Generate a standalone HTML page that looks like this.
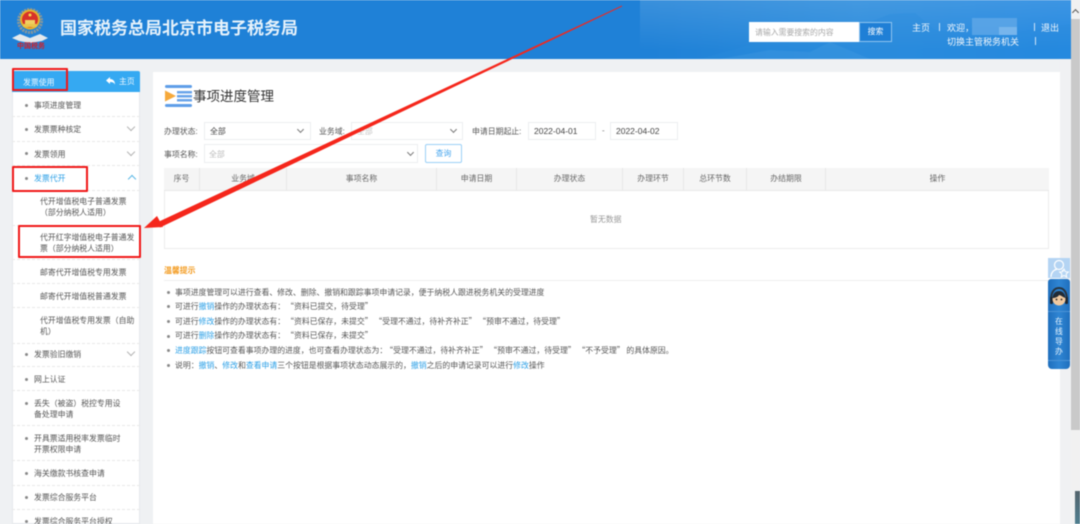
<!DOCTYPE html>
<html lang="zh">
<head>
<meta charset="utf-8">
<title>事项进度管理</title>
<style>
html,body{margin:0;padding:0;width:1080px;height:524px;overflow:hidden;background:#eff1f3}
body{position:relative;font-family:"Liberation Sans","Noto Sans CJK SC",sans-serif;font-size:7.87px;color:#555}
#w{position:absolute;left:0;top:0;width:1080px;height:524px;overflow:hidden;filter:blur(.45px)}
.a{position:absolute}
.t{position:absolute;white-space:nowrap;line-height:12px;height:12px;margin-top:1px}
.n{font-family:"Noto Sans CJK SC",sans-serif}
.b{position:absolute;width:3px;height:3px;border-radius:50%;background:#8a8a8a}
.s{position:absolute;left:12px;width:128px;height:0;border-top:1px dashed #e8e8e8}
.c{position:absolute;width:5px;height:5px;border-right:1px solid #b4b4b4;border-bottom:1px solid #b4b4b4;transform:rotate(45deg)}
.i{position:absolute;background:#fff;border:1px solid #eceef0;box-sizing:border-box}
.h{position:absolute;top:168px;height:22px;line-height:22px;text-align:center;background:#f5f5f5;border-right:1px solid #e8e8e8;box-sizing:border-box;color:#666}
.r{position:absolute;border:2px solid #f01818;box-sizing:border-box;border-radius:1px}
.l{color:#2a9fe6}
.w{color:#f3f7fb;font-size:9px}
.g{margin-left:5px}
</style>
</head>
<body>
<div id="w">
<!-- header -->
<div class="a" style="left:0;top:0;width:1071px;height:59px;background:linear-gradient(90deg,#1f81d7 0,#1f81d7 60%,#2a8bdc 80%,#2287e0 100%)"></div>
<div class="a" style="left:640px;top:0;width:431px;height:59px;background:linear-gradient(180deg,rgba(255,255,255,.12),rgba(255,255,255,0) 85%)"></div>
<svg class="a" style="left:700px;top:0" width="371" height="59" viewBox="0 0 371 59">
<path d="M0 59L60 42 120 32 160 26 190 14 215 13 235 30 290 36 371 24V59Z" fill="#2a8bdc" opacity=".35"/>
<path d="M20 59L70 50 110 52 130 42 170 59Z" fill="#5aa8e6" opacity=".2"/>
</svg>
<!-- logo -->
<svg class="a" style="left:10px;top:5px" width="42" height="50" viewBox="0 0 42 50">
<path d="M2 33L10 29 20 33 30 29 38 33 32 36 20 38 9 36Z" fill="#e4e9ed"/>
<circle cx="20" cy="16" r="11.500" fill="none" stroke="#8a989a" stroke-width="3" stroke-dasharray="2 1"/>
<circle cx="20" cy="14.500" r="10" fill="#e5b22d"/>
<circle cx="20" cy="14.500" r="8" fill="#d8322a"/>
<path d="M13 19h14v3H13z" fill="#e8c44a"/>
<path d="M15 19v-4h10v4z" fill="#f0cf62"/>
<circle cx="20" cy="10" r="1.500" fill="#f7d94c"/>
</svg>
<div class="t" style="left:17px;top:41px;color:#d0202a;font-size:7px;font-weight:700;line-height:10px;height:10px">中国税务</div>
<div class="t" style="left:60px;top:16px;height:24px;line-height:24px;font-size:17px;font-weight:700;color:#e6f2fb">国家税务总局北京市电子税务局</div>
<!-- search -->
<div class="a" style="left:749px;top:22px;width:110px;height:20px;background:#fff"></div>
<div class="t" style="left:755px;top:26px;color:#a8a8a8">请输入需要搜索的内容</div>
<div class="a" style="left:859px;top:22px;width:33px;height:20px;box-sizing:border-box;border:1px solid #8fc4ef;background:#1f7fd6;color:#fff;text-align:center;line-height:18px">搜索</div>
<div class="t w" style="left:912px;top:21px">主页</div>
<div class="a" style="left:939px;top:23px;width:1px;height:8px;background:#cfe4f7"></div>
<div class="t w" style="left:947px;top:21px">欢迎，</div>
<div class="a" style="left:972px;top:18px;width:45px;height:17px;background:#66abe8;opacity:.7"></div>
<div class="a" style="left:999px;top:27px;width:18px;height:8px;background:#86bdee;opacity:.7"></div>
<div class="a" style="left:1034px;top:23px;width:1px;height:8px;background:#cfe4f7"></div>
<div class="t w" style="left:1041px;top:21px">退出</div>
<div class="t w" style="left:947px;top:35px">切换主管税务机关</div>
<div class="a" style="left:1035px;top:37px;width:1px;height:8px;background:#cfe4f7"></div>

<!-- sidebar -->
<div class="a" style="left:12px;top:71px;width:128px;height:453px;background:#fff;border:1px solid #e6e9ec;border-top:0;box-sizing:border-box"></div>
<div class="a" style="left:12px;top:71px;width:128px;height:21px;background:#35a9f2;border-radius:2px 2px 0 0"></div>
<div class="t" style="left:23px;top:76px;color:#eef8ff">发票使用</div>
<svg class="a" style="left:106px;top:77px" width="10" height="9" viewBox="0 0 10 9"><path d="M4 0L0 3.500 4 7V5c2.500 0 4 .6 5 2.500C9 4 7 2 4 2z" fill="#fff"/></svg>
<div class="t" style="left:119px;top:75px;color:#eef8ff">主页</div>

<i class="b" style="left:25px;top:104px"></i><div class="t" style="left:34px;top:99px">事项进度管理</div>
<div class="s" style="top:116px"></div>
<i class="b" style="left:25px;top:128px"></i><div class="t" style="left:34px;top:123px">发票票种核定</div>
<i class="c" style="left:128px;top:124px"></i>
<div class="s" style="top:141px"></div>
<i class="b" style="left:25px;top:152px"></i><div class="t" style="left:34px;top:148px">发票领用</div>
<i class="c" style="left:128px;top:149px"></i>
<div class="s" style="top:165px"></div>
<i class="b" style="left:25px;top:177px"></i><div class="t l" style="left:34px;top:172px">发票代开</div>
<i class="c" style="left:129px;top:176px;transform:rotate(225deg);border-color:#5db8e6"></i>
<div class="s" style="top:190px"></div>

<div class="t" style="left:40px;top:195px">代开增值税电子普通发票</div>
<div class="t" style="left:40px;top:206px">（部分纳税人适用）</div>
<div class="s" style="top:225px"></div>
<div class="t" style="left:40px;top:231px">代开红字增值税电子普通发</div>
<div class="t" style="left:40px;top:242px">票（部分纳税人适用）</div>
<div class="s" style="top:259px"></div>
<div class="t" style="left:40px;top:266px">邮寄代开增值税专用发票</div>
<div class="s" style="top:283px"></div>
<div class="t" style="left:40px;top:290px">邮寄代开增值税普通发票</div>
<div class="s" style="top:307px"></div>
<div class="t" style="left:40px;top:314px">代开增值税专用发票（自助</div>
<div class="t" style="left:40px;top:325px">机）</div>
<div class="s" style="top:343px"></div>
<i class="b" style="left:25px;top:353px"></i><div class="t" style="left:34px;top:348px">发票验旧缴销</div>
<i class="c" style="left:128px;top:349px"></i>
<div class="s" style="top:366px"></div>
<i class="b" style="left:25px;top:378px"></i><div class="t" style="left:34px;top:373px">网上认证</div>
<div class="s" style="top:390px"></div>
<i class="b" style="left:25px;top:402px"></i><div class="t" style="left:34px;top:397px">丢失（被盗）税控专用设</div>
<div class="t" style="left:34px;top:408px">备处理申请</div>
<div class="s" style="top:425px"></div>
<i class="b" style="left:25px;top:437px"></i><div class="t" style="left:34px;top:432px">开具票适用税率发票临时</div>
<div class="t" style="left:34px;top:443px">开票权限申请</div>
<div class="s" style="top:460px"></div>
<i class="b" style="left:25px;top:472px"></i><div class="t" style="left:34px;top:467px">海关缴款书核查申请</div>
<div class="s" style="top:485px"></div>
<i class="b" style="left:25px;top:496px"></i><div class="t" style="left:34px;top:491px">发票综合服务平台</div>
<div class="s" style="top:509px"></div>
<i class="b" style="left:25px;top:520px"></i><div class="t" style="left:34px;top:515px">发票综合服务平台授权</div>

<!-- main -->
<div class="a" style="left:153px;top:72px;width:907px;height:452px;background:#fff"></div>
<svg class="a" style="left:165px;top:85px" width="28" height="23" viewBox="0 0 28 23">
<rect x="0" y="0" width="27" height="3" rx="1.500" fill="#5f9ee8"/>
<rect x="0" y="19" width="27" height="3" rx="1.500" fill="#5f9ee8"/>
<path d="M0 5.500L11 11 0 16.500Z" fill="#f6a93b"/>
<rect x="12" y="6" width="15" height="2.500" fill="#6aa5ea"/>
<rect x="12" y="10" width="15" height="2.500" fill="#6aa5ea"/>
<rect x="12" y="14" width="15" height="2.500" fill="#6aa5ea"/>
</svg>
<div class="t" style="left:193px;top:86px;height:20px;line-height:20px;font-size:13.500px;color:#333">事项进度管理</div>

<div class="t" style="left:164px;top:125px">办理状态:</div>
<div class="i" style="left:204px;top:122px;width:107px;height:18px"></div>
<div class="t" style="left:210px;top:125px;color:#444">全部</div>
<i class="c" style="left:298px;top:127px;width:4px;height:4px;border-color:#777"></i>
<div class="t" style="left:319px;top:125px">业务域:</div>
<div class="i" style="left:351px;top:122px;width:112px;height:18px"></div>
<div class="t" style="left:357px;top:125px;color:#c4c4c4">全部</div>
<i class="c" style="left:451px;top:127px;width:4px;height:4px;border-color:#777"></i>
<div class="t" style="left:472px;top:125px">申请日期起止:</div>
<div class="i" style="left:528px;top:122px;width:68px;height:18px"></div>
<div class="t" style="left:534px;top:124px;color:#444;font-size:8.500px">2022-04-01</div>
<div class="t" style="left:602px;top:124px;color:#777">-</div>
<div class="i" style="left:610px;top:122px;width:68px;height:18px"></div>
<div class="t" style="left:616px;top:124px;color:#444;font-size:8.500px">2022-04-02</div>

<div class="t" style="left:164px;top:148px">事项名称:</div>
<div class="i" style="left:204px;top:144px;width:214px;height:19px"></div>
<div class="t" style="left:209px;top:148px;color:#bbb">全部</div>
<i class="c" style="left:408px;top:150px;width:4px;height:4px;border-color:#777"></i>
<div class="a" style="left:425px;top:144px;width:37px;height:19px;box-sizing:border-box;border:1px solid #9bd0f7;border-radius:2px;text-align:center;line-height:17px;color:#45a5ee">查询</div>

<!-- table -->
<div class="a" style="left:164px;top:168px;width:885px;height:81px;border:1px solid #ececec;box-sizing:border-box"></div>
<div class="h" style="left:164px;width:36px">序号</div>
<div class="h" style="left:200px;width:87px">业务域</div>
<div class="h" style="left:287px;width:150px">事项名称</div>
<div class="h" style="left:437px;width:80px">申请日期</div>
<div class="h" style="left:517px;width:106px">办理状态</div>
<div class="h" style="left:623px;width:61px">办理环节</div>
<div class="h" style="left:684px;width:63px">总环节数</div>
<div class="h" style="left:747px;width:79px">办结期限</div>
<div class="h" style="left:826px;width:223px;border-right:0">操作</div>
<div class="a" style="left:164px;top:190px;width:885px;height:1px;background:#e8e8e8"></div>
<div class="t" style="left:590px;top:213px;color:#999">暂无数据</div>

<!-- tips -->
<div class="t" style="left:164px;top:264px;color:#f39a1e;font-weight:700">温馨提示</div>
<div class="a" style="left:164px;top:280px;width:885px;height:1px;background:#eeeeee"></div>
<i class="b" style="left:167px;top:291px"></i><div class="t n" style="left:175px;top:286px">事项进度管理可以进行查看、修改、删除、撤销和跟踪事项申请记录，便于纳税人跟进税务机关的受理进度</div>
<i class="b" style="left:167px;top:305px"></i><div class="t n" style="left:175px;top:300px">可进行<span class="l">撤销</span>操作的办理状态有：<span class="g">“资料已提交，待受理”</span></div>
<i class="b" style="left:167px;top:320px"></i><div class="t n" style="left:175px;top:315px">可进行<span class="l">修改</span>操作的办理状态有：<span class="g">“资料已保存，未提交” “受理不通过，待补齐补正” “预审不通过，待受理”</span></div>
<i class="b" style="left:167px;top:335px"></i><div class="t n" style="left:175px;top:329px">可进行<span class="l">删除</span>操作的办理状态有：<span class="g">“资料已保存，未提交”</span></div>
<i class="b" style="left:167px;top:349px"></i><div class="t n" style="left:175px;top:344px"><span class="l">进度跟踪</span>按钮可查看事项办理的进度，也可查看办理状态为：<span style="margin-left:2px">“受理不通过，待补齐补正” “预审不通过，待受理” “不予受理” 的具体原因。</span></div>
<i class="b" style="left:167px;top:364px"></i><div class="t n" style="left:175px;top:359px">说明：<span class="l">撤销</span>、<span class="l">修改</span>和<span class="l">查看申请</span>三个按钮是根据事项状态动态展示的，<span class="l">撤销</span>之后的申请记录可以进行<span class="l">修改</span>操作</div>

<!-- scrollbar -->
<div class="a" style="left:1060px;top:59px;width:20px;height:465px;background:#f0f1f3"></div>
<div class="a" style="left:1071px;top:0;width:9px;height:524px;background:#f1f1f1"></div>
<div class="a" style="left:1071px;top:19px;width:9px;height:411px;background:#c9c9c9"></div>
<div class="a" style="left:1073px;top:10px;width:4px;height:4px;border-left:1.500px solid #555;border-top:1.500px solid #555;transform:rotate(45deg)"></div>
<div class="a" style="left:1075px;top:491px;width:5px;height:33px;background:linear-gradient(180deg,#54646c,#4f7f90)"></div>

<!-- floating widgets -->
<div class="a" style="left:1048px;top:258px;width:22px;height:20px;background:#b4d4f3"></div>
<svg class="a" style="left:1048px;top:258px" width="22" height="20" viewBox="0 0 22 20">
<circle cx="11" cy="7" r="4.500" fill="none" stroke="#fff" stroke-width="1.200"/>
<path d="M3 19c0-5 3-7 6-8M14 12l1 1" fill="none" stroke="#fff" stroke-width="1.200"/>
<path d="M16 11l1.300 2.700 3 .3-2.200 2 .6 3-2.700-1.500-2.700 1.500.6-3-2.200-2 3-.3z" fill="none" stroke="#fff" stroke-width="1"/>
</svg>
<div class="a" style="left:1048px;top:279px;width:22px;height:90px;background:linear-gradient(90deg,#1f6fbe,#2f86d4 50%,#1f6fbe);border-radius:3px 3px 4px 4px"></div>
<svg class="a" style="left:1048px;top:286px" width="22" height="24" viewBox="0 0 22 24">
<path d="M3 14C3 5 7 2 11 2s8 3 8 12" fill="none" stroke="#27333f" stroke-width="2"/>
<rect x="2" y="11" width="3" height="7" rx="1" fill="#1d2630"/>
<rect x="17" y="11" width="3" height="7" rx="1" fill="#1d2630"/>
<circle cx="11" cy="13" r="6.500" fill="#f0c9a0"/>
<path d="M4.500 12C5 7 8 5 11 5s6 2 6.500 7c-3-1-5-3-6.500-3-1 2-4 3-6.500 3z" fill="#222b35"/>
<circle cx="8.500" cy="13.500" r=".9" fill="#222"/><circle cx="13.500" cy="13.500" r=".9" fill="#222"/>
</svg>
<div class="a" style="left:1048px;top:311px;width:22px;height:1px;background:#4c93d6"></div>
<div class="a" style="left:1048px;top:360px;width:22px;height:1px;background:#4c93d6"></div>
<div class="t" style="left:1055px;top:315px;color:#e8f2fb">在</div>
<div class="t" style="left:1055px;top:325px;color:#e8f2fb">线</div>
<div class="t" style="left:1055px;top:335px;color:#e8f2fb">导</div>
<div class="t" style="left:1055px;top:345px;color:#e8f2fb">办</div>

<!-- annotations -->
<div class="r" style="left:12px;top:68px;width:56px;height:23px"></div>
<div class="r" style="left:12px;top:166px;width:76px;height:26px"></div>
<div class="r" style="left:18px;top:225px;width:123px;height:33px"></div>
<svg class="a" style="left:0;top:0" width="1080" height="524" viewBox="0 0 1080 524">
<path d="M622 5.500L158 222 160 227.500 622 6.500Z" fill="#f5261b"/>
<path d="M144 228L157 216 163 227Z" fill="#f5261b"/>
</svg>
</div>
</body>
</html>
